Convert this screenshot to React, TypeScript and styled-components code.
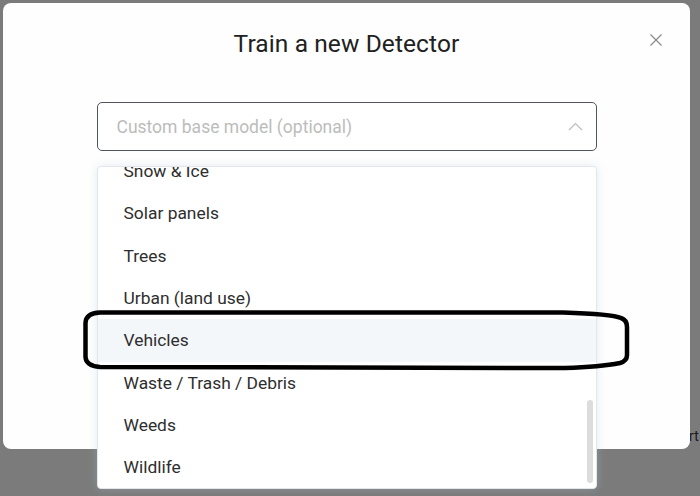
import React from "react";
import styled, { createGlobalStyle } from "styled-components";

const Global = createGlobalStyle`
  html, body { margin: 0; padding: 0; }
  body {
    width: 700px;
    height: 496px;
    overflow: hidden;
    background: #7b7b7b;
    font-family: Roboto, "Liberation Sans", Arial, sans-serif;
  }
`;

const Page = styled.div`
  position: relative;
  width: 700px;
  height: 496px;
  background: #7b7b7b;
  overflow: hidden;
`;

const Backdrop = styled.div`
  height: 100%;
  display: flex;
  align-items: flex-end;
  justify-content: space-between;
  padding: 0 1px 50px 0;
  box-sizing: border-box;
`;

const BackdropText = styled.span<{ $align: "left" | "right" }>`
  font-size: 15px;
  color: #1e1e1e;
  line-height: 20px;
  margin: ${(p) => (p.$align === "left" ? "0 0 0 -30px" : "0")};
`;

const Overlay = styled.div`
  position: absolute;
  inset: 0;
  padding: 3px;
  box-sizing: border-box;
`;

const Modal = styled.div`
  width: 687px;
  height: 446px;
  background: #fefefe;
  border-radius: 8px;
  box-sizing: border-box;
  padding-top: 27px;
  display: flex;
  flex-direction: column;
  align-items: center;
`;

const Header = styled.div`
  width: 100%;
  display: grid;
  grid-template-columns: 1fr auto 1fr;
  padding: 0 28px;
  box-sizing: border-box;
`;

const Title = styled.h2`
  grid-column: 2;
  margin: 0;
  font-size: 24.5px;
  line-height: 28px;
  font-weight: 400;
  color: #212121;
  letter-spacing: 0.1px;
`;

const CloseButton = styled.button`
  grid-column: 3;
  justify-self: end;
  align-self: start;
  margin-top: 4px;
  width: 12px;
  height: 12px;
  padding: 0;
  border: 0;
  background: transparent;
  display: flex;
`;

const SelectWrap = styled.div`
  position: relative;
  width: 500px;
  margin-top: 44px;
`;

const SelectBox = styled.div`
  height: 49px;
  box-sizing: border-box;
  border: 1px solid #50555b;
  border-radius: 5px;
  display: flex;
  align-items: center;
  justify-content: space-between;
  padding: 0 13px 0 19px;
  background: #fff;
`;

const Placeholder = styled.span`
  font-size: 17.5px;
  color: #bcbcbc;
`;

const Dropdown = styled.div`
  position: absolute;
  left: 0;
  right: 0;
  top: 64px;
  height: 323px;
  box-sizing: border-box;
  border: 1px solid #e3e7ec;
  border-radius: 4px;
  background: #fff;
  box-shadow: 0 0 10px rgba(180, 195, 215, 0.35);
  overflow: hidden;
`;

const List = styled.ul<{ $offset: number }>`
  list-style: none;
  margin: ${(p) => -p.$offset}px 0 0 0;
  padding: 0;
`;

const Item = styled.li<{ $active?: boolean }>`
  height: 42.33px;
  display: flex;
  align-items: center;
  padding-left: 26px;
  font-size: 17.4px;
  color: #2e2e2e;
  background: ${(p) => (p.$active ? "#f4f7fa" : "transparent")};
`;

const Thumb = styled.div`
  position: absolute;
  right: 3px;
  top: 233px;
  width: 6px;
  height: 83px;
  border-radius: 3px;
  background: #dcdcdc;
`;

const Annotation = styled.svg`
  position: absolute;
  left: 0;
  top: 0;
  pointer-events: none;
`;

const items = [
  "Snow & Ice",
  "Solar panels",
  "Trees",
  "Urban (land use)",
  "Vehicles",
  "Waste / Trash / Debris",
  "Weeds",
  "Wildlife",
];

export default function App() {
  return (
    <>
      <Global />
      <Page>
        <Backdrop>
          <BackdropText $align="left">Li</BackdropText>
          <BackdropText $align="right">Start</BackdropText>
        </Backdrop>
        <Overlay>
          <Modal>
            <Header>
              <Title>Train a new Detector</Title>
              <CloseButton aria-label="Close">
                <svg width="12" height="12" viewBox="0 0 12 12">
                  <path
                    d="M0.5 0.5 L11.5 11.5 M11.5 0.5 L0.5 11.5"
                    stroke="#8a8a8a"
                    strokeWidth="1.2"
                    fill="none"
                  />
                </svg>
              </CloseButton>
            </Header>
            <SelectWrap>
              <SelectBox>
                <Placeholder>Custom base model (optional)</Placeholder>
                <svg width="15" height="9" viewBox="0 0 15 9">
                  <path
                    d="M1 8 L7.5 1.5 L14 8"
                    stroke="#bdbdbd"
                    strokeWidth="1.2"
                    fill="none"
                  />
                </svg>
              </SelectBox>
              <Dropdown>
                <List $offset={17}>
                  {items.map((it) => (
                    <Item key={it} $active={it === "Vehicles"}>
                      {it}
                    </Item>
                  ))}
                </List>
                <Thumb />
              </Dropdown>
            </SelectWrap>
          </Modal>
        </Overlay>
        <Annotation width="700" height="496" viewBox="0 0 700 496">
          <path
            d="M100 312.5 L563 312.5 Q612 314 621 318 Q627 320 627 327 L627 355 Q627 361 620 363 Q600 367 565 368 L100 367 Q86 366 85.5 357 L85.5 323 Q86 313 100 312.5 Z"
            stroke="#000"
            strokeWidth="4.5"
            fill="none"
            strokeLinejoin="round"
          />
        </Annotation>
      </Page>
    </>
  );
}
